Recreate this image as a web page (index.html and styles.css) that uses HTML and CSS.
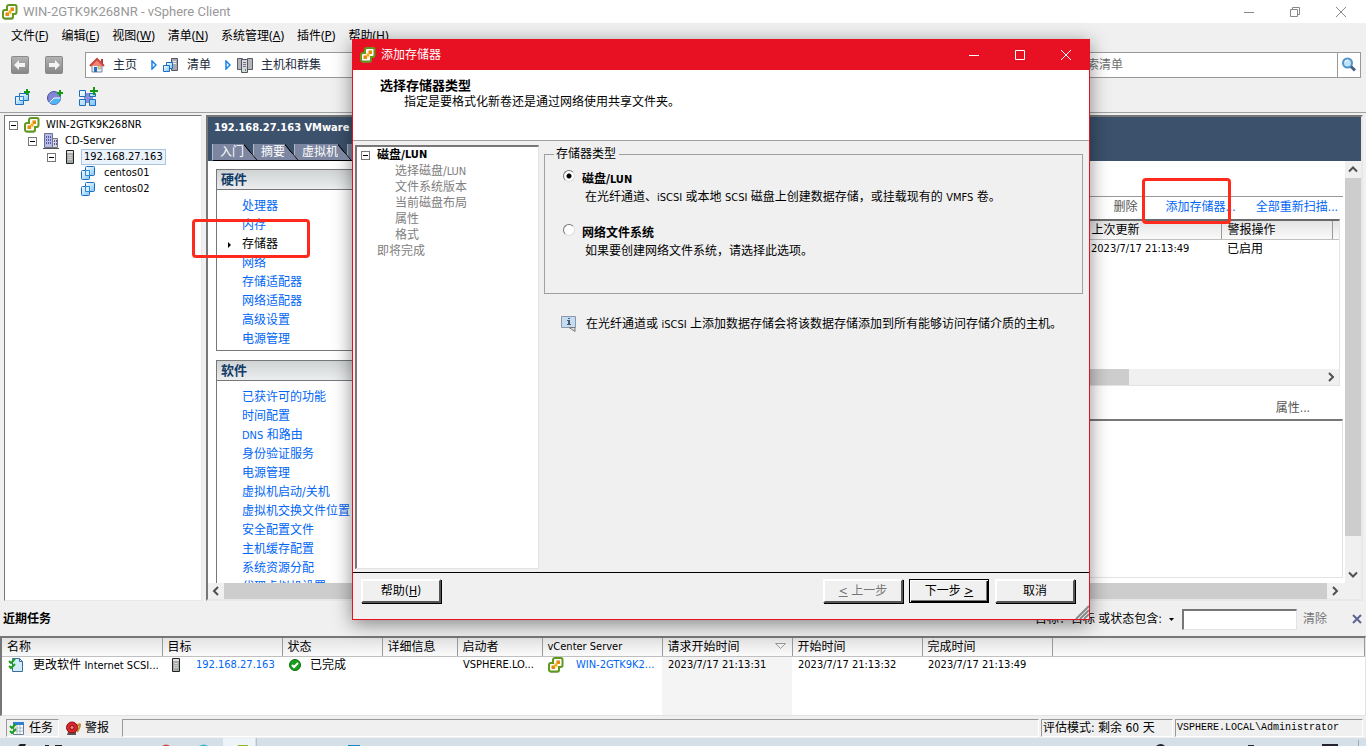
FILE: index.html
```html
<!DOCTYPE html>
<html lang="zh-CN">
<head>
<meta charset="utf-8">
<title>WIN-2GTK9K268NR - vSphere Client</title>
<link rel="stylesheet" href="styles.css">
</head>
<body>
<svg class="defs" aria-hidden="true">
  <linearGradient id="gray" x1="0" y1="0" x2="0" y2="1"><stop offset="0" stop-color="#b4b4b4"/><stop offset="1" stop-color="#868686"/></linearGradient>
  <linearGradient id="sky" x1="0" y1="0" x2="1" y2="1"><stop offset="0" stop-color="#ffffff"/><stop offset="1" stop-color="#7cc6f4"/></linearGradient>
  <symbol id="i-vs" viewBox="0 0 16 16">
    <path d="M7 2h6q2 0 2 2v5q0 2-2 2h-1v2q0 3-3 3H3q-1 0-1-1z" fill="#8a8a8a" opacity=".6"/>
    <path d="M7 1h6q1.500 0 1.500 1.500V8q0 2-2 2H11v2.500q0 2-2 2H3Q1 14.500 1 12.500V8q0-2 2-2h2V3q0-2 2-2z" fill="#fff" stroke="#5f9a1c" stroke-width="2"/>
    <path d="M8 3.500h4V7H9.500v4.500h-6V8H7V5h1z" fill="#fff3c8"/>
    <path d="M8.500 3.500H12V7H8.500zM3.500 8.500H7V12H3.500z" fill="#e58a10"/>
    <path d="M6.500 6.500h3v3h-3z" fill="#f6ad1f"/>
  </symbol>
  <symbol id="i-vm" viewBox="0 0 16 16">
    <rect x="5.500" y="1.500" width="9" height="9" rx="1" fill="url(#sky)" stroke="#1c6fc0"/>
    <rect x="1.500" y="5.500" width="8" height="9" rx="1" fill="url(#sky)" stroke="#1c6fc0"/>
    <path d="M5.500 5.500h4v5h-4z" fill="#d8f0ff" stroke="#2f86d2"/>
  </symbol>
  <symbol id="i-host" viewBox="0 0 16 16">
    <path d="M4.500 1.500h7v13h-7z" fill="#aaa" stroke="#222"/><path d="M5 2h6v2H5z" fill="#e2e2e2"/><path d="M6 6.500h4M6 8.500h4M6 10.500h4" stroke="#d0d0d0"/><path d="M9 12.500h1" stroke="#4c4"/>
  </symbol>
  <symbol id="i-dc" viewBox="0 0 16 16">
    <path d="M1.500 .5h8v14h-8z" fill="#b9bce6" stroke="#6b6e8c"/><path d="M9.500 5.500h5v9h-5z" fill="#d5d5dc" stroke="#77777f"/>
    <path d="M3 3h1v2H3zM5 3h1v2H5zM7 3h1v2H7zM3 6h1v2H3zM5 6h1v2H5zM7 6h1v2H7zM3 9h1v2H3zM5 9h1v2H5zM7 9h1v2H7zM11 7h1v2h-1zM13 7h1v2h-1zM11 10h1v2h-1zM13 10h1v2h-1z" fill="#5258ad"/><path d="M0 15.500h16" stroke="#555"/>
  </symbol>
  <symbol id="i-plus" viewBox="0 0 6 6"><path d="M3 0v6M0 3h6" stroke="#139a13" stroke-width="2"/></symbol>
</svg>

<div class="app">
  <header class="titlebar">
    <svg class="ic"><use href="#i-vs"/></svg>
    <h1>WIN-2GTK9K268NR - vSphere Client</h1>
    <div class="win-controls">
      <button aria-label="最小化"><svg viewBox="0 0 12 12"><path d="M1 6.500h10" stroke="#888"/></svg></button>
      <button aria-label="还原"><svg viewBox="0 0 12 12"><path d="M1.500 3.500h7v7h-7zM3.500 3V1.500h7v7H9" fill="none" stroke="#888"/></svg></button>
      <button aria-label="关闭"><svg viewBox="0 0 12 12"><path d="M1 1l10 10M11 1L1 11" stroke="#888"/></svg></button>
    </div>
  </header>

  <nav class="menu">
    <button>文件(<u>F</u>)</button><button>编辑(<u>E</u>)</button><button>视图(<u>W</u>)</button><button>清单(<u>N</u>)</button><button>系统管理(<u>A</u>)</button><button>插件(<u>P</u>)</button><button>帮助(<u>H</u>)</button>
  </nav>

  <div class="navbar">
    <button class="arrow" aria-label="后退"><svg viewBox="0 0 18 18"><rect x=".5" y=".5" width="17" height="17" rx="1" fill="url(#gray)" stroke="#8a8a8a"/><path d="M3 9l5-5v3h6v4H8v3z" fill="#f4f4f4"/></svg></button>
    <button class="arrow" aria-label="前进"><svg viewBox="0 0 18 18"><rect x=".5" y=".5" width="17" height="17" rx="1" fill="url(#gray)" stroke="#8a8a8a"/><path d="M15 9l-5-5v3H4v4h6v3z" fill="#f4f4f4"/></svg></button>
    <div class="address">
      <a href="#"><svg class="ic" viewBox="0 0 16 16"><path d="M3 8h10v7H3z" fill="#eef3fa" stroke="#7286a6"/><path d="M5 10h3v5H5z" fill="#2b6db5"/><path d="M9 9h3v3H9z" fill="#f5d67a" stroke="#7286a6" stroke-width=".5"/><path d="M12 2h2v5h-2z" fill="#b03a35"/><path d="M1 9l7-7 7 7" fill="#ef8577" stroke="#c9453d" stroke-width="2"/></svg><span>主页</span></a>
      <svg class="tri" viewBox="0 0 6 10"><path d="M1 1l4 4-4 4z" fill="#fff" stroke="#1583e8" stroke-width="1.500"/></svg>
      <a href="#"><svg class="ic" viewBox="0 0 16 16"><path d="M8.500 1.500h6v12h-6z" fill="#a9a9b2" stroke="#55555f"/><path d="M10 4.500h3M10 6.500h3" stroke="#eee"/><path d="M3.500 5.500h6v6h-6z" fill="url(#sky)" stroke="#1c6fc0"/><path d="M.5 8.500h6v6h-6z" fill="url(#sky)" stroke="#1c6fc0"/></svg><span>清单</span></a>
      <svg class="tri" viewBox="0 0 6 10"><path d="M1 1l4 4-4 4z" fill="#fff" stroke="#1583e8" stroke-width="1.500"/></svg>
      <a href="#"><svg class="ic" viewBox="0 0 16 16"><path d="M.5 1.500h5v11h-5zM10.500 1.500h5v11h-5z" fill="#b5b5bd" stroke="#5b5b66"/><path d="M4.500 2.500h6v13h-6z" fill="#d6d6de" stroke="#55555f"/><path d="M6 5.500h3M6 7.500h3M6 9.500h3" stroke="#777788"/><path d="M8 12h1v2H8z" fill="#3a3"/></svg><span>主机和群集</span></a>
      <label class="search"><input type="text" aria-label="搜索清单" placeholder="搜索清单"></label>
    </div>
    <button class="find" aria-label="搜索"><svg viewBox="0 0 16 16"><circle cx="6.500" cy="6" r="4.500" fill="#bfe3fb" stroke="#4d93cc" stroke-width="2"/><path d="M10 9.500l4 4" stroke="#4a5d80" stroke-width="3"/><path d="M4 5q1-2 3-2" stroke="#fff" fill="none"/></svg></button>
  </div>

  <div class="toolbar">
    <button aria-label="新建虚拟机"><svg viewBox="0 0 20 20"><path d="M6.500 6.500h9v7h-9z" fill="url(#sky)" stroke="#1c6fc0"/><path d="M2.500 9.500h8v8h-8z" fill="url(#sky)" stroke="#1c6fc0"/><path d="M6.500 9.500h4v4h-4z" fill="#d8f0ff" stroke="#2f86d2"/><path d="M14 2v6M11 5h6" stroke="#139a13" stroke-width="2"/></svg></button>
    <button aria-label="新建资源池"><svg viewBox="0 0 20 20"><circle cx="8" cy="11" r="6.500" fill="#8187d6" stroke="#454b9c"/><path d="M8 11h6.500A6.500 6.500 0 0 1 3.500 15.600z" fill="#4db6f2"/><path d="M3.500 15.600L8 11h6.500" fill="none" stroke="#fff"/><path d="M14 3v6M11 6h6" stroke="#139a13" stroke-width="2"/></svg></button>
    <button aria-label="新建 vApp"><svg viewBox="0 0 20 20"><path d="M5 6h9v10H5z" fill="#8b90d9"/><g fill="url(#sky)" stroke="#1c6fc0"><path d="M.5 3.500h6v6h-6zM.5 12.500h6v6h-6zM10.500 12.500h6v6h-6zM10.500 6.500h6v3h-6z"/></g><path d="M15 0v8M11 4h8" stroke="#139a13" stroke-width="2"/></svg></button>
  </div>

  <main class="workspace">
    <aside class="tree">
      <ul>
        <li class="lv1"><button class="fold" aria-label="折叠"></button><svg class="ic"><use href="#i-vs"/></svg><span>WIN-2GTK9K268NR</span></li>
        <li class="lv2"><button class="fold" aria-label="折叠"></button><svg class="ic"><use href="#i-dc"/></svg><span>CD-Server</span></li>
        <li class="lv3"><button class="fold" aria-label="折叠"></button><svg class="ic"><use href="#i-host"/></svg><span class="sel">192.168.27.163</span></li>
        <li class="lv4"><svg class="ic"><use href="#i-vm"/></svg><span>centos01</span></li>
        <li class="lv4"><svg class="ic"><use href="#i-vm"/></svg><span>centos02</span></li>
      </ul>
    </aside>

    <section class="detail">
      <div class="detail-head">
        <h2>192.168.27.163 VMware ESXi</h2>
        <div class="tabs"><button>入门</button><button>摘要</button><button>虚拟机</button><button>性能</button></div>
      </div>
      <div class="detail-body">
        <div class="content">
          <div class="side">
            <section class="panel">
              <h3>硬件</h3>
              <ul><li><a href="#">处理器</a></li><li><a href="#">内存</a></li><li class="current">存储器</li><li><a href="#">网络</a></li><li><a href="#">存储适配器</a></li><li><a href="#">网络适配器</a></li><li><a href="#">高级设置</a></li><li><a href="#">电源管理</a></li></ul>
            </section>
            <section class="panel">
              <h3>软件</h3>
              <ul><li><a href="#">已获许可的功能</a></li><li><a href="#">时间配置</a></li><li><a href="#"><span class="en">DNS</span> 和路由</a></li><li><a href="#">身份验证服务</a></li><li><a href="#">电源管理</a></li><li><a href="#">虚拟机启动/关机</a></li><li><a href="#">虚拟机交换文件位置</a></li><li><a href="#">安全配置文件</a></li><li><a href="#">主机缓存配置</a></li><li><a href="#">系统资源分配</a></li><li><a href="#">代理虚拟机设置</a></li></ul>
            </section>
          </div>
          <div class="storage">
            <div class="links"><a class="off">删除</a><a href="#">添加存储器...</a><a href="#">全部重新扫描...</a></div>
            <div class="list">
              <table>
                <thead><tr><th></th><th class="c-date">上次更新</th><th class="c-alarm">警报操作</th><th class="c-end"></th></tr></thead>
                <tbody><tr><td></td><td class="en">2023/7/17 21:13:49</td><td>已启用</td><td></td></tr></tbody>
              </table>
              <div class="hbar list-bar"><span class="thumb"></span><svg viewBox="0 0 16 16"><path d="M6 4l4 4-4 4" fill="none" stroke="#505050" stroke-width="2"/></svg></div>
            </div>
            <div class="props"><span>属性...</span></div>
            <div class="props-box"></div>
          </div>
        </div>
        <div class="vbar"><svg viewBox="0 0 16 16"><path d="M4 10l4-4 4 4" fill="none" stroke="#505050" stroke-width="2"/></svg><span class="thumb"></span><svg class="down" viewBox="0 0 16 16"><path d="M4 6l4 4 4-4" fill="none" stroke="#505050" stroke-width="2"/></svg></div>
      </div>
      <div class="hbar main-bar"><svg viewBox="0 0 16 16"><path d="M10 4L6 8l4 4" fill="none" stroke="#505050" stroke-width="2"/></svg><span class="thumb"></span><svg viewBox="0 0 16 16"><path d="M6 4l4 4-4 4" fill="none" stroke="#505050" stroke-width="2"/></svg><span class="corner"></span></div>
    </section>
  </main>

  <section class="tasks">
    <div class="tasks-head">
      <h2>近期任务</h2>
      <label for="filter">目标：目标 或状态包含:</label>
      <svg class="caret" viewBox="0 0 5 3"><path d="M0 0h5L2.500 3z"/></svg>
      <input id="filter" type="text">
      <button class="clear">清除</button>
      <button class="close" aria-label="关闭"><svg viewBox="0 0 10 10"><path d="M1 1l8 8M9 1L1 9" stroke="#5c6690" stroke-width="2"/></svg></button>
    </div>
    <div class="tasks-list">
      <table>
        <colgroup><col class="w160"><col class="w120"><col class="w100"><col class="w75"><col class="w85"><col class="w120"><col class="w130"><col class="w130"><col class="w130"><col></colgroup>
        <thead><tr><th>名称</th><th>目标</th><th>状态</th><th>详细信息</th><th>启动者</th><th class="en">vCenter Server</th><th><span class="sort">请求开始时间<svg viewBox="0 0 12 7"><path d="M.5.5h10L5.500 5.500z" fill="#eee" stroke="#999"/></svg></span></th><th>开始时间</th><th>完成时间</th><th></th></tr></thead>
        <tbody>
          <tr>
            <td><span class="cell"><svg class="ic" viewBox="0 0 16 16"><path d="M4.500 1.500h7l3 3v10h-10z" fill="#d4ecfa" stroke="#3b6ea0"/><path d="M11.500 1.500v3h3" fill="none" stroke="#3b6ea0"/><path d="M1 4l2 2 4-4M1 9l2 2 4-4" fill="none" stroke="#1da01d" stroke-width="2"/></svg><span>更改软件 <span class="en">Internet SCSI...</span></span></span></td>
            <td><span class="cell wide"><svg class="ic"><use href="#i-host"/></svg><a class="en" href="#">192.168.27.163</a></span></td>
            <td><span class="cell tight"><svg class="ic" viewBox="0 0 16 16"><circle cx="7" cy="8" r="5.500" fill="#17a01d" stroke="#0c6d12"/><path d="M4 8l2 2 4-4" fill="none" stroke="#fff" stroke-width="2"/></svg><span>已完成</span></span></td>
            <td></td><td class="en">VSPHERE.LO...</td>
            <td><span class="cell wide"><svg class="ic"><use href="#i-vs"/></svg><a class="en" href="#">WIN-2GTK9K2...</a></span></td>
            <td class="en sorted">2023/7/17 21:13:31</td><td class="en">2023/7/17 21:13:32</td><td class="en">2023/7/17 21:13:49</td><td></td>
          </tr>
          <tr class="filler"><td colspan="6"></td><td class="sorted"></td><td colspan="3"></td></tr>
        </tbody>
      </table>
    </div>
  </section>

  <footer class="status">
    <button class="pressed"><svg class="ic" viewBox="0 0 16 16"><path d="M4.500 2.500h10v12h-10z" fill="#fff" stroke="#6a7f96"/><path d="M4 2h11v3H4z" fill="#2f7fd0"/><path d="M5 8h9M5 11h9M8 5v9M11 5v9" stroke="#a8b8c8"/><path d="M1 6l2 2 4-4M1 11l2 2 4-4" fill="none" stroke="#1da01d" stroke-width="2"/></svg>任务</button>
    <button class="alarm"><svg class="ic" viewBox="0 0 16 16"><path d="M3 12h8v3H2z" fill="#555"/><path d="M12 6q3-3 3-1t-3 7" fill="none" stroke="#c08a2d" stroke-width="2"/><circle cx="7" cy="7.500" r="5.500" fill="#d7262c" stroke="#8e1015"/><circle cx="7" cy="7.500" r="2" fill="#f28b86" stroke="#8e1015"/></svg>警报</button>
    <span class="box grow"></span>
    <span class="box eval">评估模式: 剩余 60 天</span>
    <span class="box user">VSPHERE.LOCAL\Administrator</span>
  </footer>

  <div class="taskbar">
    <svg class="marks" viewBox="0 0 400 8"><path d="M18 8l2-2h6l-1 2zM45 8V7h4v1zM55 8V7h7v1z" fill="#222"/><path d="M162 8q4-3 8 0z" fill="#d9443a"/><path d="M199 8q5-3 9 0z" fill="#35b6d6"/><path d="M223 0h32v8h-32z" fill="#eef3f7"/><path d="M238 8V7h10v1z" fill="#8bb926"/><path d="M256.500 0v8" stroke="#b5c3cf"/><path d="M348 8V7h12v1z" fill="#1683c9"/></svg>
    <svg class="tray" viewBox="0 0 220 8"><path d="M10 8q5-4 9 0zM102 7h6v1h-6zM176 6h16v2h-16z" fill="#223"/><path d="M212.500 2v6" stroke="#9eabb8"/></svg>
  </div>

  <div class="mark mark-menu"></div>
  <div class="mark mark-add"></div>

  <div class="dialog" role="dialog" aria-labelledby="dlg-title">
    <header class="dlg-title">
      <svg class="ic"><use href="#i-vs"/></svg>
      <h2 id="dlg-title">添加存储器</h2>
      <div class="win-controls">
        <button aria-label="最小化"><svg viewBox="0 0 12 12"><path d="M1 6.500h10" stroke="#fff"/></svg></button>
        <button aria-label="最大化"><svg viewBox="0 0 12 12"><path d="M1.500 1.500h9v9h-9z" fill="none" stroke="#fff"/></svg></button>
        <button aria-label="关闭"><svg viewBox="0 0 12 12"><path d="M1 1l10 10M11 1L1 11" stroke="#fff"/></svg></button>
      </div>
    </header>
    <div class="dlg-intro"><h3>选择存储器类型</h3><p>指定是要格式化新卷还是通过网络使用共享文件夹。</p></div>
    <div class="dlg-body">
      <ol class="steps">
        <li class="active"><button class="fold" aria-label="折叠"></button>磁盘/<span class="en">LUN</span></li>
        <li class="sub">选择磁盘/<span class="en">LUN</span></li><li class="sub">文件系统版本</li><li class="sub">当前磁盘布局</li><li class="sub">属性</li><li class="sub">格式</li>
        <li class="last">即将完成</li>
      </ol>
      <div class="form">
        <fieldset>
          <legend>存储器类型</legend>
          <div class="option"><input type="radio" name="kind" id="lun" checked><div><label for="lun">磁盘/<span class="en">LUN</span></label><p>在光纤通道、<span class="en">iSCSI</span> 或本地 <span class="en">SCSI</span> 磁盘上创建数据存储，或挂载现有的 <span class="en">VMFS</span> 卷。</p></div></div>
          <div class="option"><input type="radio" name="kind" id="nfs"><div><label for="nfs">网络文件系统</label><p>如果要创建网络文件系统，请选择此选项。</p></div></div>
        </fieldset>
        <div class="note"><svg class="ic" viewBox="0 0 16 16"><path d="M.5 .5h14v11h-14z" fill="#c3dcf2" stroke="#8a98a8"/><path d="M7 2h2v1H7zM6 4h3v4h1v1H6V8h1V5H6z" fill="#4b5866"/><path d="M8 11.500l6 4M9 11.500h5v4" stroke="#777" fill="#ddd"/></svg><p>在光纤通道或 <span class="en">iSCSI</span> 上添加数据存储会将该数据存储添加到所有能够访问存储介质的主机。</p></div>
      </div>
    </div>
    <footer class="dlg-foot">
      <button>帮助(<u>H</u>)</button>
      <button class="push" disabled><u>&lt;</u> 上一步</button>
      <button class="default">下一步 <u>&gt;</u></button>
      <button>取消</button>
    </footer>
    <svg class="grip" viewBox="0 0 14 14"><path d="M1 14L14 1M5 14l9-9M9 14l5-5" stroke="#888" stroke-width="2"/></svg>
  </div>
</div>
</body>
</html>
```
FILE: styles.css
```css
* { box-sizing: border-box; }
body, h1, h2, h3, p, ul, ol, fieldset, legend { margin: 0; padding: 0; }
ul, ol { list-style: none; }
body, button, input {
  font: 12px/16px "DejaVu Sans Condensed", "Noto Sans CJK SC", sans-serif;
  color: #000;
}
button { background: none; border: 0; padding: 0; white-space: nowrap; }
a { color: #0066f5; text-decoration: none; }
.en { font-size: 11px; }
.defs { position: absolute; width: 0; height: 0; }
.ic { width: 16px; height: 16px; flex: none; }

.app {
  position: relative;
  display: flex;
  flex-direction: column;
  min-height: 100vh;
  background: #f0f0f0;
  overflow: hidden;
}

.titlebar {
  display: flex;
  align-items: center;
  height: 23px;
  padding-left: 2px;
  background: #fff;
}
.titlebar h1 {
  flex: 1;
  margin-left: 5px;
  font: 13px/16px Roboto, sans-serif;
  color: #999;
}
.win-controls { display: flex; }
.win-controls button { width: 46px; height: 20px; display: grid; place-items: center; }
.win-controls svg { width: 12px; height: 12px; }
.titlebar .win-controls { margin-right: 2px; }

.menu { display: flex; gap: 13px; height: 25px; align-items: center; padding-left: 11px; }
.menu button { font-family: "Noto Sans", "Noto Sans CJK SC", sans-serif; }

.navbar { display: flex; align-items: center; height: 33px; padding: 0 5px 0 11px; }
.arrow { width: 18px; height: 18px; margin-right: 16px; }
.arrow svg { display: block; }
.address {
  flex: 1;
  display: flex;
  align-items: center;
  height: 26px;
  margin-left: 6px;
  padding-left: 3px;
  background: #fff;
  border: 1px solid #999;
}
.address a { display: flex; align-items: center; gap: 8px; color: #1d2b3c; }
.tri { width: 6px; height: 10px; margin: 0 6px 0 14px; }
.search { margin-left: auto; width: 262px; }
.search input { width: 100%; border: 0; background: none; padding: 0; }
.search input::placeholder { color: #707070; opacity: 1; }
.find {
  width: 23px;
  height: 26px;
  border: 1px solid #999;
  border-left: 0;
  background: #fff;
  display: grid;
  place-items: center;
}
.find svg { width: 16px; height: 16px; }

.toolbar {
  display: flex;
  gap: 13px;
  align-items: center;
  height: 32px;
  padding: 0 0 0 13px;
  border-bottom: 1px solid #a0a0a0;
}
.toolbar button, .toolbar svg { display: block; width: 20px; height: 20px; }

.workspace { flex: 1; display: flex; gap: 4px; padding: 2px 3px 1px 4px; min-height: 0; }
.tree, .detail { border: 2px solid; border-color: #777 #e8e8e8 #e8e8e8 #777; background: #fff; }
.tree { width: 198px; flex: none; border-width: 1px; padding: 1px 3px; font-size: 11px; }
.tree li { display: flex; align-items: center; height: 16px; }
.tree li span { padding: 0 3px; margin-left: 3px; }
.tree .sel { background: #eaf2fb; outline: 1px solid #a9c4de; outline-offset: -1px; }
.lv2 { padding-left: 19px; }
.lv3 { padding-left: 38px; }
.lv4 { padding-left: 72px; }
.tree .lv4 span { margin-left: 5px; }
.fold {
  width: 9px;
  height: 9px;
  flex: none;
  border: 1px solid #777;
  background: linear-gradient(#000, #000) 1px 3px / 5px 1px no-repeat #fff;
}
.tree .fold { margin: 0 6px 0 1px; }

.detail { flex: 1; min-width: 0; display: flex; flex-direction: column; }
.detail-head {
  display: flex;
  flex-direction: column;
  justify-content: space-between;
  height: 44px;
  background: #3c516c;
}
.detail-head h2 { padding: 3px 6px; font-size: 11px; line-height: 16px; color: #fff; }
.tabs { display: flex; padding-left: 4px; }
.tabs button {
  display: flex;
  height: 17px;
  padding-left: 7px;
  margin-right: -5px;
  color: #fff;
  line-height: 16px;
  background: linear-gradient(#7c86a0, #7c86a0) no-repeat 0 0 / calc(100% - 14px) 100%;
  border-left: 1px solid #b4bccb;
  border-bottom: 1px solid #000;
  clip-path: polygon(0 0, calc(100% - 14px) 0, 100% 100%, 0 100%);
}
.tabs button::after {
  content: "";
  width: 14px;
  height: 16px;
  background: linear-gradient(to top right, #7c86a0 44%, #000 46%);
}
.tabs button:nth-child(1) { z-index: 3; }
.tabs button:nth-child(2) { z-index: 2; }
.tabs button:nth-child(3) { z-index: 1; }

.detail-body { flex: 1 1 0; display: flex; min-height: 0; }
.content { flex: 1; min-width: 0; display: flex; padding: 8px 2px 0 8px; overflow: hidden; }
.side { width: 200px; flex: none; }
.panel { border: 1px solid #777; margin-bottom: 9px; padding-bottom: 1px; }
.panel h3 {
  height: 20px;
  padding-left: 4px;
  border-bottom: 1px solid #777;
  background: linear-gradient(#d0d3d4, #ebedef);
  color: #123c68;
  font-size: 13px;
  line-height: 20px;
}
.panel ul { padding: 7px 0 0 25px; }
.panel li { height: 19px; line-height: 19px; white-space: nowrap; }
.current { position: relative; }
.current::before {
  content: "";
  position: absolute;
  left: -14px;
  top: 7px;
  border: 3px solid transparent;
  border-left: 3px solid #000;
}

.storage { flex: 1; min-width: 0; display: flex; flex-direction: column; padding: 27px 0 5px; margin-left: 8px; }
.links {
  display: flex;
  justify-content: flex-end;
  gap: 20px;
  padding: 1px 5px 0 0;
  height: 23px;
  line-height: 19px;
  border-top: 1px solid #999;
}
.off { color: #555; margin-right: 8px; }
.list { height: 167px; margin-right: 3px; display: flex; flex-direction: column; justify-content: space-between; border: 1px solid #e3e3e3; border-top: 2px solid #696969; }
table { border-collapse: collapse; table-layout: fixed; width: 100%; }
th {
  height: 18px;
  padding: 0 5px;
  text-align: left;
  font-weight: normal;
  line-height: 16px;
  white-space: nowrap;
  background: linear-gradient(#e3e3e3, #fafafa);
  border-right: 1px solid #999;
  border-bottom: 1px solid #c0c0c0;
}
td { height: 18px; padding: 0 6px; line-height: 16px; white-space: nowrap; overflow: hidden; }
.list tbody td { height: 20px; }
.list th { padding-left: 6px; }
.c-date { width: 136px; }
.c-alarm { width: 111px; }
.list .c-end { width: 7px; border-right: 0; padding: 0; }
.hbar { display: flex; height: 16px; background: #f0f0f0; }
.hbar svg { width: 16px; height: 16px; flex: none; }
.thumb { background: #cdcdcd; }
.list-bar { justify-content: space-between; }
.list-bar .thumb { width: calc(100% - 210px); }
.props { display: flex; justify-content: flex-end; height: 33px; padding: 14px 33px 0 0; color: #555; }
.props-box { flex: 1; border: 1px solid #e3e3e3; border-top: 2px solid #777; }
.vbar { width: 16px; display: flex; flex-direction: column; background: #f0f0f0; }
.vbar svg { width: 16px; height: 17px; flex: none; }
.vbar .thumb { flex: 1; margin-bottom: 30px; }
.main-bar .thumb { flex: 1; }
.main-bar .corner { width: 18px; }

.tasks-head { display: flex; align-items: center; height: 34px; padding: 0 4px 0 3px; }
.tasks-head h2 { flex: 1; font-size: 12px; line-height: 16px; }
.caret { width: 5px; height: 3px; margin: 0 8px 0 7px; }
#filter { width: 115px; height: 21px; border: 1px solid #e3e3e3; border-top: 2px solid #777; border-left: 2px solid #777; background: #fff; }
.clear { margin: 0 25px 0 6px; color: #777; }
.close { width: 10px; height: 18px; }
.close svg { width: 10px; height: 10px; display: block; }
.tasks-list { height: 80px; background: #fff; border: 1px solid #e3e3e3; border-top: 2px solid #777; border-left: 2px solid #777; }
.tasks-list table { height: 100%; }
.tasks-list td { padding: 0 0 0 6px; }
.tasks-list .filler td { height: auto; }
.w160 { width: 160px; } .w120 { width: 120px; } .w100 { width: 100px; } .w75 { width: 75px; } .w85 { width: 85px; } .w130 { width: 130px; }
.sorted { background: #f4f4f4; }
.sort { display: flex; justify-content: space-between; align-items: center; }
.sort svg { width: 12px; height: 7px; }
.cell { display: flex; align-items: center; gap: 9px; }
.wide { gap: 12px; }
.tight { gap: 6px; }

.status { display: flex; align-items: center; gap: 2px; height: 22px; padding: 3px 3px 1px 6px; }
.status button { display: flex; align-items: center; gap: 4px; height: 18px; padding: 0 5px 0 2px; margin-right: 4px; }
.status .alarm { padding-left: 0; margin-right: 6px; }
.status .pressed { border: 1px solid #fff; border-top-color: #999; border-left-color: #999; }
.box {
  height: 18px;
  padding-left: 1px;
  line-height: 16px;
  white-space: nowrap;
  border: 1px solid #fff;
  border-top-color: #999;
  border-left-color: #999;
}
.grow { flex: 1; }
.eval { width: 132px; }
.user { width: 188px; font-family: "Liberation Mono", monospace; font-size: 10px; }
.taskbar { display: flex; justify-content: space-between; height: 8px; background: #d5dfe8; }
.marks { width: 400px; height: 8px; }
.tray { width: 220px; height: 8px; }

.mark { position: absolute; border: 3px solid #ff2a1c; border-radius: 4px; }
.mark-menu { left: 192px; top: 219px; width: 118px; height: 39px; }
.mark-add { right: 135px; top: 178px; width: 89px; height: 46px; }

.dialog {
  position: absolute;
  left: 352px;
  top: 39px;
  width: 738px;
  height: 581px;
  display: flex;
  flex-direction: column;
  background: #f0f0f0;
  border: 1px solid #e81123;
  box-shadow: 0 4px 18px rgba(0, 0, 0, .45);
}
.dlg-title { display: flex; align-items: center; height: 30px; padding-left: 7px; background: #e81123; }
.dlg-title h2 { flex: 1; margin-left: 5px; font-size: 12px; font-weight: normal; color: #fff; }
.dlg-intro { height: 71px; padding: 8px 27px; background: #fff; border-bottom: 1px solid #a0a0a0; }
.dlg-intro h3 { font-size: 13px; line-height: 16px; }
.dlg-intro p { padding-left: 24px; }
.dlg-body { flex: 1; display: flex; padding: 4px 6px 3px 2px; border-bottom: 1px solid #000; }
.steps { width: 184px; flex: none; background: #fff; border: 1px solid #e3e3e3; border-top: 2px solid #777; border-left: 2px solid #777; color: #808080; }
.steps li { height: 16px; padding-left: 20px; }
.steps .sub { padding-left: 38px; }
.steps .active { display: flex; align-items: center; padding-left: 4px; color: #000; font-weight: bold; }
.steps .fold { margin-right: 7px; }
.form { flex: 1; padding: 1px 0 0 5px; }
fieldset { height: 148px; padding: 0 9px; border: 1px solid #a0a0a0; min-width: 0; }
legend { padding: 0 3px 0 2px; height: 16px; }
.option { display: flex; align-items: flex-start; height: 54px; padding: 8px 0 0 9px; }
.option input {
  appearance: none;
  width: 12px;
  height: 12px;
  margin: 0 7px 0 0;
  border: 1px solid;
  border-color: #777 #ddd #ddd #777;
  border-radius: 50%;
  background: #fff;
}
.option input:checked { background: radial-gradient(circle, #000 2px, #fff 3px); }
.option label { display: block; height: 16px; margin-top: 1px; font-weight: bold; }
.option p { padding: 2px 0 0 3px; white-space: nowrap; }
.note { display: flex; gap: 9px; padding: 22px 0 0 17px; white-space: nowrap; }
.dlg-foot { display: flex; gap: 6px; height: 46px; padding: 6px 14px 0 8px; }
.dlg-foot button {
  width: 80px;
  height: 24px;
  border: 2px solid;
  border-color: #fff #555 #555 #fff;
  box-shadow: 1px 1px #000;
}
.dlg-foot .push { margin-left: auto; color: #777; }
.dlg-foot .default { border: 1px solid #000; box-shadow: inset 1px 1px #fff, inset -1px -1px #000, inset -2px -2px #777; }
.grip { position: absolute; right: 0; bottom: 0; width: 14px; height: 14px; }
```
